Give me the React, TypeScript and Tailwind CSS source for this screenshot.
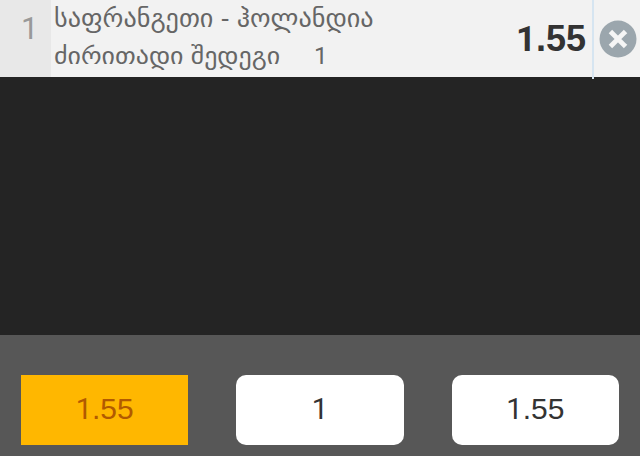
function One() {
  return <span className="font-['Roboto',sans-serif] text-[0.97em]">1</span>;
}

function Odds() {
  return (
    <span>
      <One />.55
    </span>
  );
}

export default function App() {
  return (
    <main className="flex h-[456px] w-[640px] flex-col overflow-hidden bg-[#242424] font-['Liberation_Sans','DejaVu_Sans',sans-serif]">
      <section className="flex h-[77px] shrink-0 bg-[#f2f2f2]">
        <div className="w-[51px] bg-[#e8e8e8] pt-[10px] pl-[21px] text-[32px] leading-[36px] text-[#999]">
          <One />
        </div>
        <div className="w-[465px] pl-[3px] whitespace-nowrap text-[#666]">
          <div className="h-[38px] text-[26px] leading-[37px]">
            <span className="inline-block origin-left scale-x-[1.007]">საფრანგეთი - ჰოლანდია</span>
          </div>
          <div className="flex h-[35px] text-[24px] leading-[35px]">
            <span className="w-[260px]">
              <span className="inline-block origin-left scale-x-[1.08]">ძირითადი შედეგი</span>
            </span>
            <span className="text-[25px]">
              <One />
            </span>
          </div>
        </div>
        <div className="w-[76px] pt-[18px] text-[36px] leading-[42px] font-bold text-[#333]">
          <Odds />
        </div>
        <div className="h-[79px] w-[2px] bg-[#d6e5f1]" />
        <button className="mt-[20px] ml-[5px] h-[38px] w-[38px]">
          <svg viewBox="0 0 38 38" className="h-[38px] w-[38px]">
            <circle cx="19" cy="19" r="18.5" fill="#9ba6ad" />
            <path d="M12.5 12.5L25.5 25.5M25.5 12.5L12.5 25.5" stroke="#f5f5f5" strokeWidth="5.4" strokeLinecap="square" strokeLinejoin="round" transform="translate(1.9 1.9) scale(.9)" />
          </svg>
        </button>
      </section>
      <div className="h-[258px] shrink-0" />
      <section className="flex h-[121px] shrink-0 gap-[48px] bg-[#575757] px-[21px] pt-[40px] text-[30px] text-[#333]">
        <button className="h-[70px] flex-1 bg-[#ffb700] pb-[2px] text-[#b25a00]">
          <Odds />
        </button>
        <button className="h-[70px] flex-1 rounded-[10px] bg-white pb-[2px]">
          <One />
        </button>
        <button className="h-[70px] flex-1 rounded-[10px] bg-white pb-[2px]">
          <Odds />
        </button>
      </section>
    </main>
  );
}
